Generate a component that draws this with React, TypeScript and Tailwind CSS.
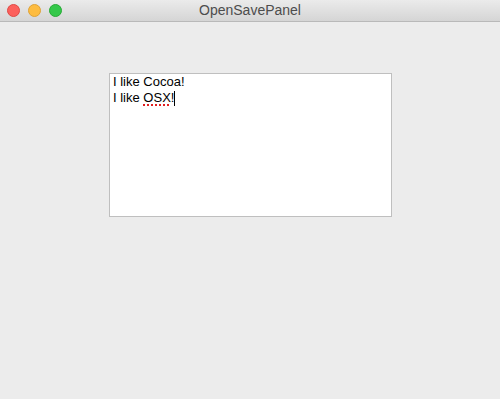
import React from "react";

const lights = [
  { fill: "bg-[#fc605c]", ring: "border-[#de4a46]" },
  { fill: "bg-[#fdbc40]", ring: "border-[#dea236]" },
  { fill: "bg-[#34c84a]", ring: "border-[#27aa35]" },
];

export default function App() {
  return (
    <div className="w-[500px] h-[399px] bg-[#ececec] flex flex-col font-['Liberation_Sans',Arial,sans-serif]">
      {/* Title bar */}
      <div className="relative h-[22px] shrink-0 flex items-center bg-gradient-to-b from-[#ebebeb] to-[#d5d5d5] border-b border-[#b9b9b9]">
        <div className="flex items-center gap-[8px] pl-[7px] -mt-px">
          {lights.map((l, i) => (
            <div key={i} className={`w-[13px] h-[13px] rounded-full border ${l.fill} ${l.ring}`} />
          ))}
        </div>
        <div className="absolute inset-0 flex items-center justify-center text-[14px] text-[#4d4d4d] pointer-events-none">
          OpenSavePanel
        </div>
      </div>

      {/* Content */}
      <div className="pt-[51px] pl-[109px]">
        <div className="w-[283px] h-[144px] bg-white border border-[#bfbfbf] px-[3px] text-[13px] leading-[16px] text-black">
          <div>I like Cocoa!</div>
          <div className="flex items-center">
            <span>I like&nbsp;</span>
            <span className="underline decoration-dotted decoration-[#e02020] decoration-2 underline-offset-2">OSX</span>
            <span>!</span>
            <span className="inline-block w-px h-[15px] bg-black" />
          </div>
        </div>
      </div>
    </div>
  );
}
